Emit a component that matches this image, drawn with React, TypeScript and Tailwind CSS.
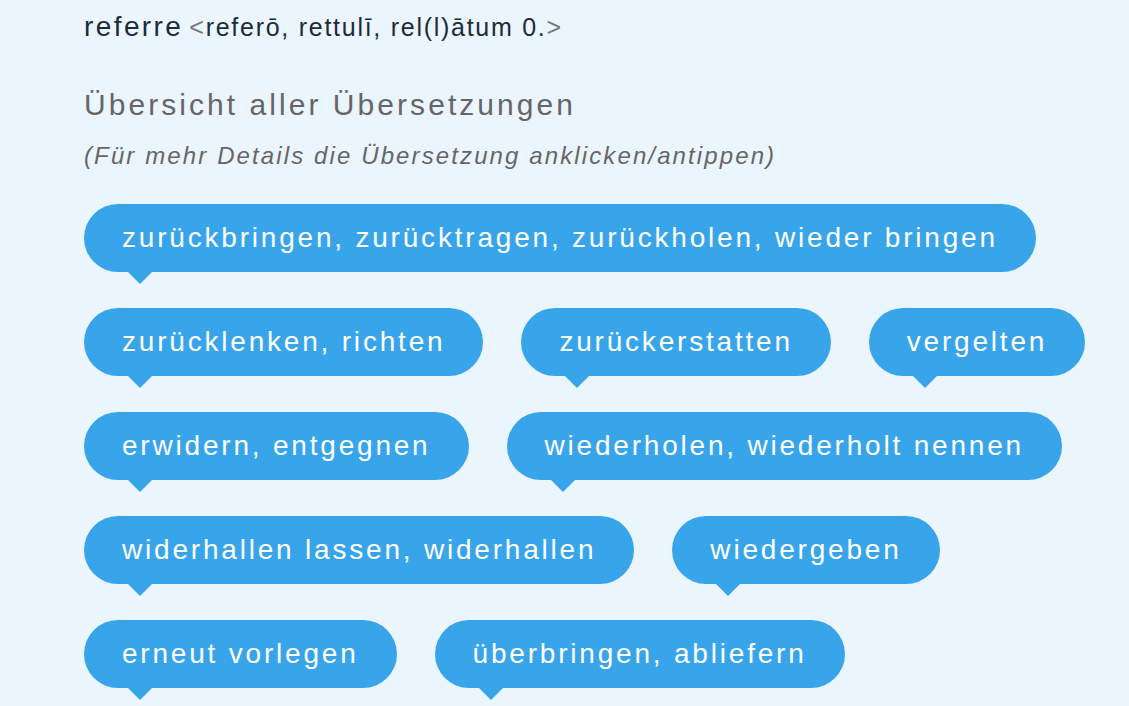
import React from "react";

const rows: string[] = [
  "zurückbringen, zurücktragen, zurückholen, wieder bringen",
  "zurücklenken, richten",
  "zurückerstatten",
  "vergelten",
  "erwidern, entgegnen",
  "wiederholen, wiederholt nennen",
  "widerhallen lassen, widerhallen",
  "wiedergeben",
  "erneut vorlegen",
  "überbringen, abliefern",
];

function Bubble({ text }: { text: string }) {
  return (
    <div className="relative h-[68px] rounded-[34px] bg-[#38a5ea] pl-[38px] pr-[38px] text-[28px] leading-[68px] tracking-[0.1em] text-white whitespace-nowrap">
      {text}
      <span className="absolute left-[44px] top-full h-0 w-0 border-l-[12px] border-r-[12px] border-t-[12px] border-l-transparent border-r-transparent border-t-[#38a5ea]" />
    </div>
  );
}

export default function App() {
  return (
    <div
      className="min-h-[706px] w-full bg-[#ebf5fe] pl-[84px] pr-[20px] pt-[9px]"
      style={{ fontFamily: '"Liberation Sans", Arial, Helvetica, sans-serif' }}
    >
      <div className="leading-[36px] whitespace-nowrap text-[#1b2b37] tracking-[1.6px]">
        <span className="text-[28px] tracking-[2.4px]">referre</span>{" "}
        <span className="text-[25px] tracking-[1.73px]">
          <span className="text-[#777]">&lt;</span>referō, rettulī, rel(l)ātum 0.
          <span className="text-[#777]">&gt;</span>
        </span>
      </div>
      <div className="mt-[38px] text-[30px] leading-[36px] tracking-[3.05px] text-[#666666]">
        Übersicht aller Übersetzungen
      </div>
      <div className="mt-[18px] text-[24px] italic leading-[30px] tracking-[0.088em] text-[#666666]">
        (Für mehr Details die Übersetzung anklicken/antippen)
      </div>
      <div className="mt-[33px] flex flex-wrap gap-x-[38px] gap-y-[36px]">
        {rows.map((t) => (
          <Bubble key={t} text={t} />
        ))}
      </div>
    </div>
  );
}
